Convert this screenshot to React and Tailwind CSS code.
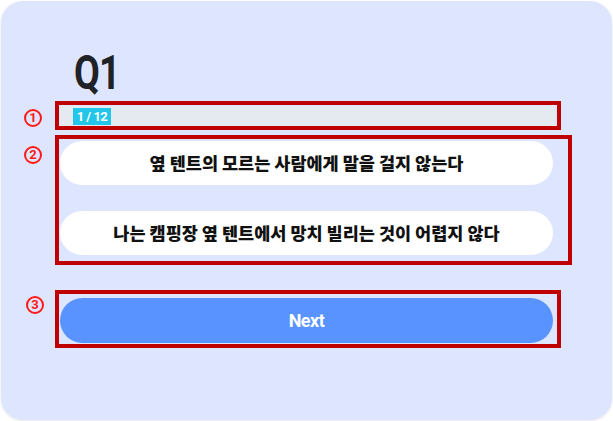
import React from 'react';

const options = [
  '옆 텐트의 모르는 사람에게 말을 걸지 않는다',
  '나는 캠핑장 옆 텐트에서 망치 빌리는 것이 어렵지 않다',
];

const kr = { fontFamily: '"Noto Sans CJK KR", "Noto Sans", sans-serif' };
const head = { fontFamily: 'Roboto, "Noto Sans", sans-serif' };

// red annotation marker: circled number
const Marker = ({ n, className }) => (
  <span
    style={head}
    className={`absolute w-[18px] h-[18px] rounded-full border-2 border-[#ff1a1a] text-[#ff1a1a] text-[13px] font-bold leading-[14px] text-center ${className}`}
  >
    {n}
  </span>
);

export default function App() {
  return (
    <div className="relative w-[613px] h-[421px] bg-white p-[1px]">
      {/* Question card */}
      <div className="h-full rounded-[22px] bg-[#dde6fe] shadow-[0_1px_3px_rgba(0,0,0,0.10)] pt-[48px]">
        <div className="ml-[59px] w-[495px] flex flex-col">
          <h1
            style={head}
            className="pl-[18px] text-[48px] leading-[48px] font-bold text-[#1f2328] tracking-[-1px] scale-x-[0.78] origin-left"
          >
            Q1
          </h1>

          {/* Progress */}
          <div className="mt-[9px] h-[20px] bg-[#e5e9f0] flex items-center pl-[13px]">
            <div
              style={head}
              className="h-[17px] w-[38px] bg-[#22c6ea] text-white text-[13px] font-bold leading-[17px] text-center tracking-[-0.5px]"
            >
              1 / 12
            </div>
          </div>

          {/* Answers */}
          <div className="mt-[15px] flex flex-col gap-[26px] pr-[2px]">
            {options.map((text) => (
              <button
                key={text}
                style={kr}
                className="h-[44px] rounded-full bg-white text-[17.5px] font-black text-[#111] flex items-center justify-center"
              >
                {text}
              </button>
            ))}
          </div>

          <button
            style={head}
            className="mt-[43px] mr-[2px] h-[45px] rounded-full bg-[#5893ff] text-white text-[18px] font-bold tracking-[-0.5px]"
          >
            Next
          </button>
        </div>
      </div>

      {/* Annotation overlays */}
      <div className="absolute left-[55px] top-[101px] w-[506px] h-[29px] border-4 border-[#c00000]" />
      <div className="absolute left-[55px] top-[135px] w-[517px] h-[130px] border-4 border-[#c00000]" />
      <div className="absolute left-[55px] top-[290px] w-[506px] h-[58px] border-4 border-[#c00000]" />

      <Marker n="1" className="left-[24px] top-[109px]" />
      <Marker n="2" className="left-[24px] top-[146px]" />
      <Marker n="3" className="left-[26px] top-[296px]" />
    </div>
  );
}
